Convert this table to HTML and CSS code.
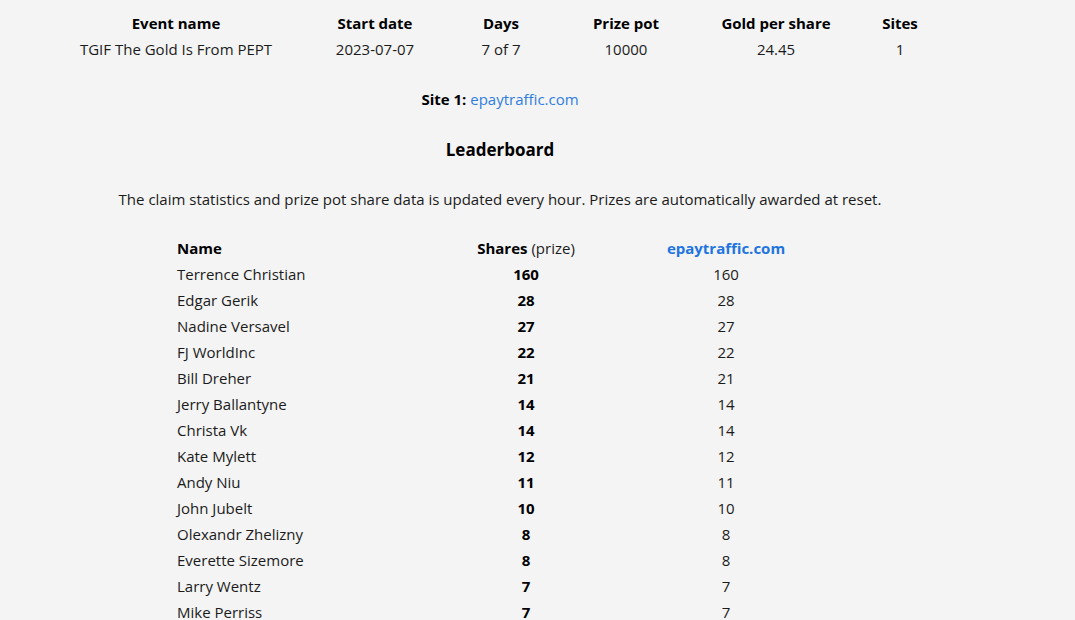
FILE: index.html
```html
<!DOCTYPE html>
<html lang="en">
<head>
<meta charset="utf-8">
<title>TGIF The Gold Is From PEPT</title>
<link rel="stylesheet" href="styles.css">
</head>
<body>
<div class="wrap">
  <table class="event">
    <thead>
      <tr><th>Event name</th><th>Start date</th><th>Days</th><th>Prize pot</th><th>Gold per share</th><th>Sites</th></tr>
    </thead>
    <tbody>
      <tr><td>TGIF The Gold Is From PEPT</td><td>2023-07-07</td><td>7 of 7</td><td>10000</td><td>24.45</td><td>1</td></tr>
    </tbody>
  </table>

  <p class="site"><b>Site 1:</b> <a href="#">epaytraffic.com</a></p>

  <h3 class="title">Leaderboard</h3>

  <p class="note">The claim statistics and prize pot share data is updated every hour. Prizes are automatically awarded at reset.</p>

  <table class="board">
    <thead>
      <tr><th>Name</th><th>Shares <span class="light">(prize)</span></th><th><a href="#">epaytraffic.com</a></th></tr>
    </thead>
    <tbody>
      <tr><td>Terrence Christian</td><td>160</td><td>160</td></tr>
      <tr><td>Edgar Gerik</td><td>28</td><td>28</td></tr>
      <tr><td>Nadine Versavel</td><td>27</td><td>27</td></tr>
      <tr><td>FJ WorldInc</td><td>22</td><td>22</td></tr>
      <tr><td>Bill Dreher</td><td>21</td><td>21</td></tr>
      <tr><td>Jerry Ballantyne</td><td>14</td><td>14</td></tr>
      <tr><td>Christa Vk</td><td>14</td><td>14</td></tr>
      <tr><td>Kate Mylett</td><td>12</td><td>12</td></tr>
      <tr><td>Andy Niu</td><td>11</td><td>11</td></tr>
      <tr><td>John Jubelt</td><td>10</td><td>10</td></tr>
      <tr><td>Olexandr Zhelizny</td><td>8</td><td>8</td></tr>
      <tr><td>Everette Sizemore</td><td>8</td><td>8</td></tr>
      <tr><td>Larry Wentz</td><td>7</td><td>7</td></tr>
      <tr><td>Mike Perriss</td><td>7</td><td>7</td></tr>
    </tbody>
  </table>
</div>
</body>
</html>
```

FILE: styles.css
```css
html, body {
  margin: 0;
  padding: 0;
  background: #f4f4f4;
}

body {
  font-family: "Open Sans", "Noto Sans", "Liberation Sans", sans-serif;
  font-size: 15px;
  color: #1b1b1b;
}

a {
  color: #2f7de1;
  text-decoration: none;
}

.wrap {
  width: 1000px;
}

table {
  border-collapse: collapse;
  border-spacing: 0;
}

th, td {
  padding: 0;
  line-height: 26px;
  white-space: nowrap;
}

th {
  font-weight: 700;
  color: #000;
}

/* Event summary table */
.event {
  margin: 10px 0 0 60px;
  table-layout: fixed;
}

.event th, .event td {
  text-align: center;
}

.event th:nth-child(1) { width: 232px; }
.event th:nth-child(2) { width: 166px; }
.event th:nth-child(3) { width: 86px; }
.event th:nth-child(4) { width: 164px; }
.event th:nth-child(5) { width: 136px; }
.event th:nth-child(6) { width: 112px; }

.site {
  margin: 24px 0 0;
  line-height: 26px;
  text-align: center;
}

.site b {
  color: #000;
}

.title {
  margin: 25px 0 0;
  line-height: 26px;
  font-size: 17px;
  text-align: center;
  color: #000;
}

.note {
  margin: 23px 0 0;
  line-height: 26px;
  text-align: center;
}

/* Leaderboard table */
.board {
  margin: 23px 0 0 177px;
  table-layout: fixed;
}

.board th:nth-child(1) { width: 249px; text-align: left; }
.board th:nth-child(2) { width: 200px; text-align: center; }
.board th:nth-child(3) { width: 200px; text-align: center; }

.board td:nth-child(1) { text-align: left; }
.board td:nth-child(2) { text-align: center; font-weight: 700; color: #000; }
.board td:nth-child(3) { text-align: center; }

.board th a {
  color: #1f74e0;
}

.light {
  font-weight: 400;
  color: #1b1b1b;
}
```
